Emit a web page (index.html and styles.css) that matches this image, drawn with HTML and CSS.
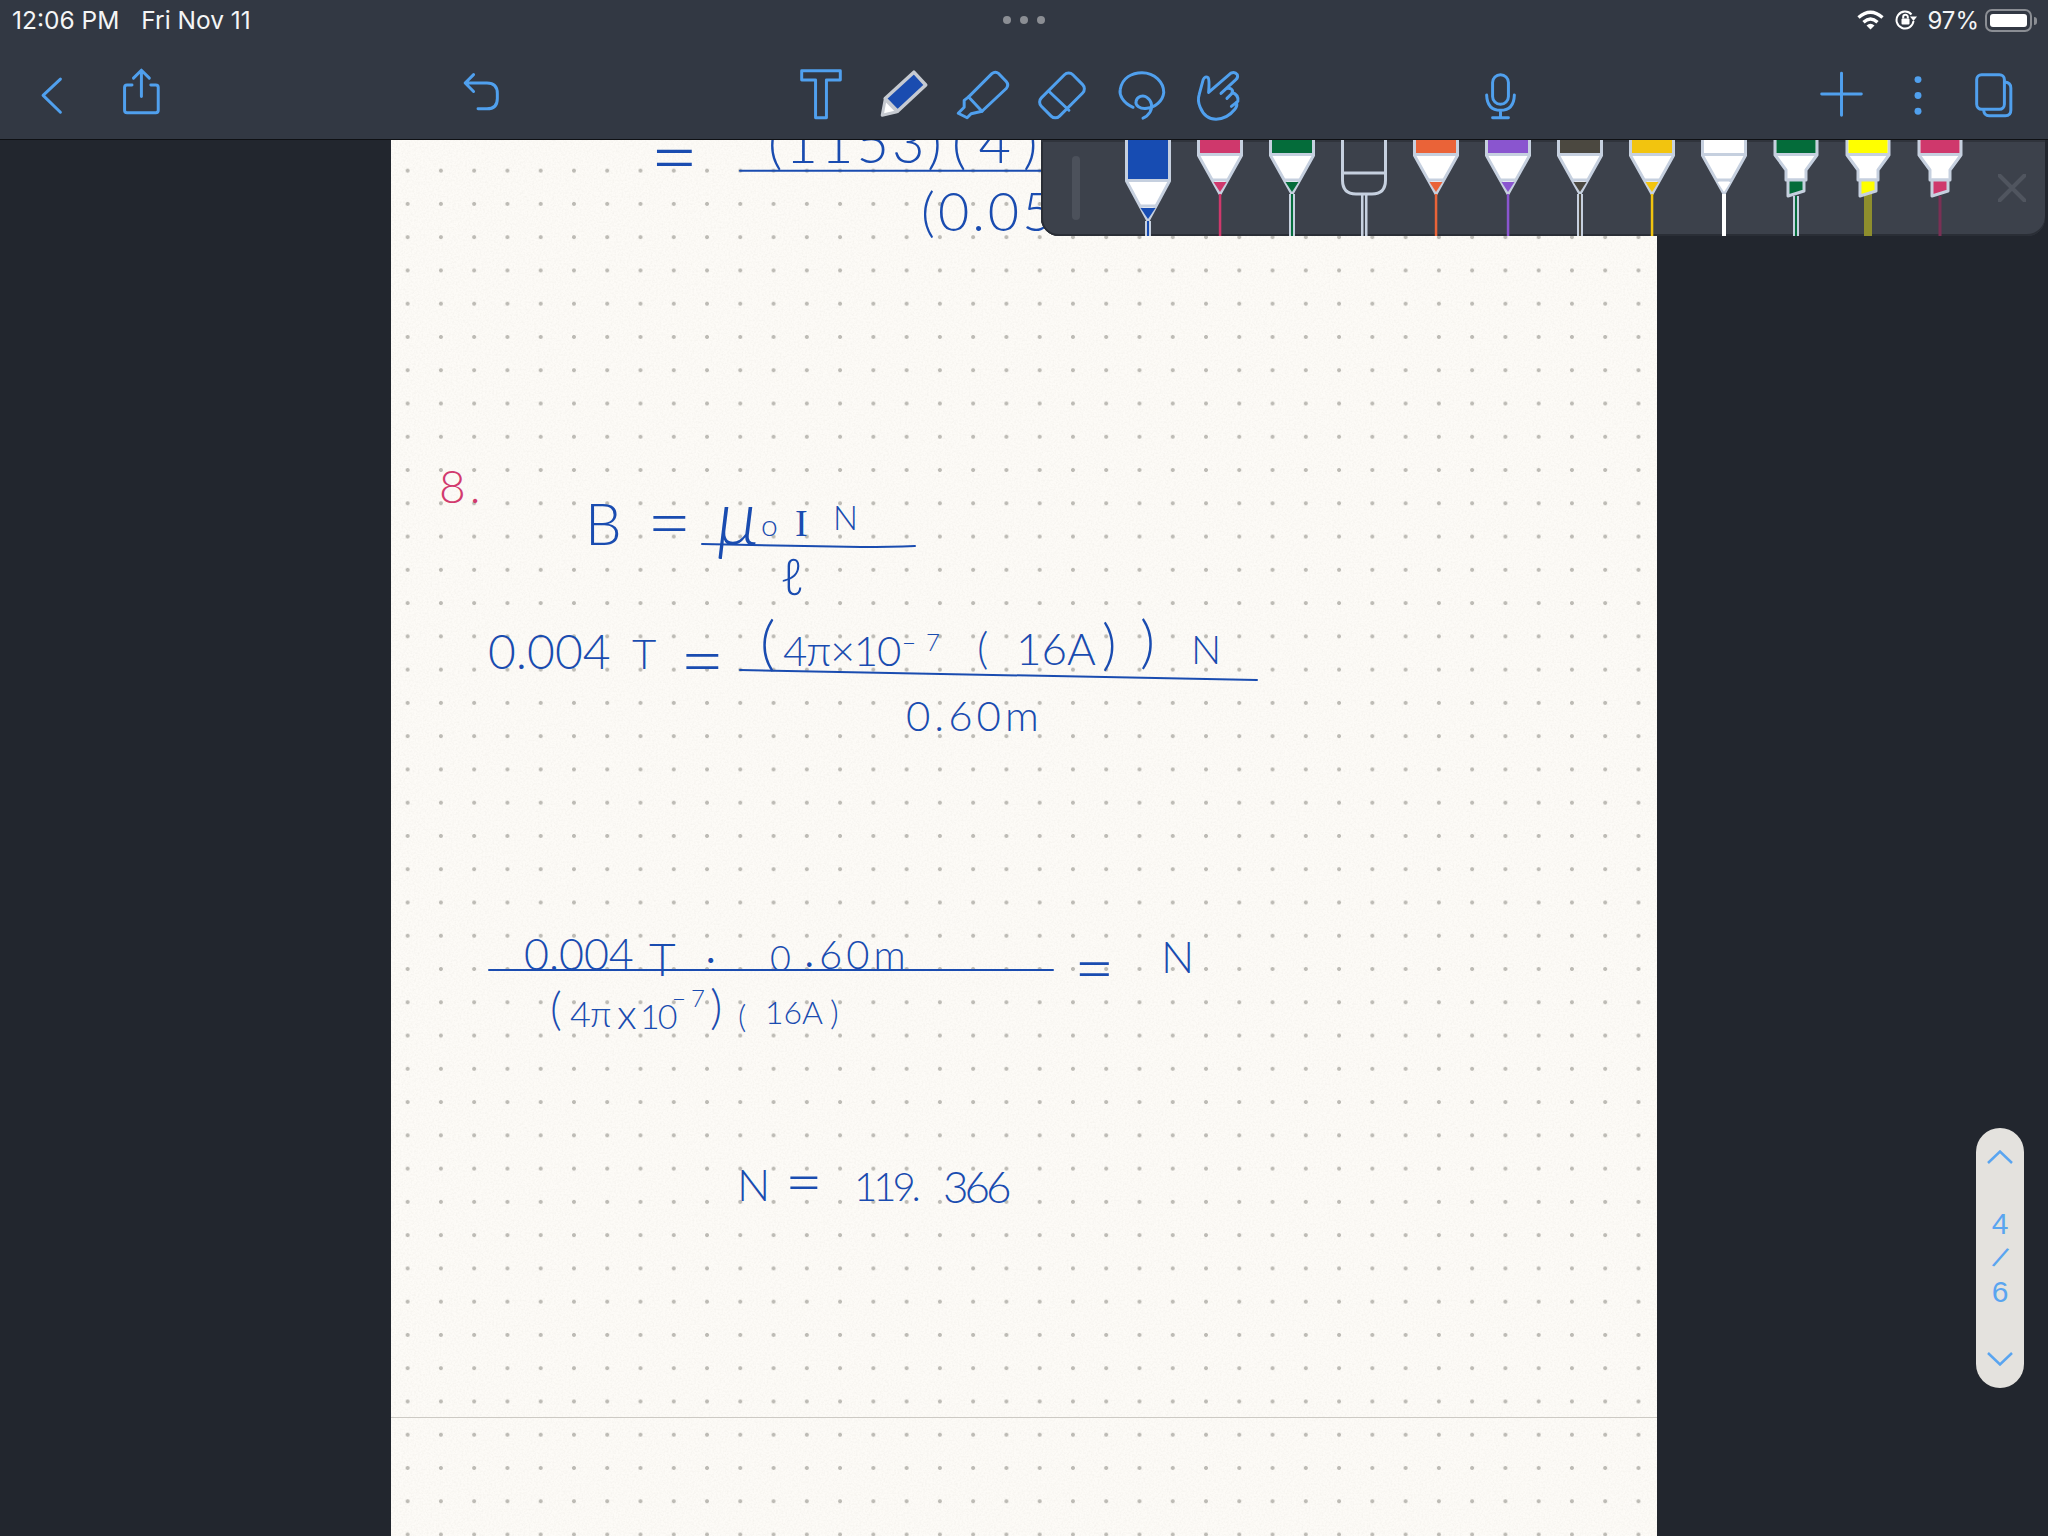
FILE: index.html
```html
<!DOCTYPE html>
<html lang="en">
  <head>
    <meta charset="UTF-8" />
    <meta name="viewport" content="width=device-width, initial-scale=1.0" />
    <title>Notes</title>
    <link rel="stylesheet" href="styles.css">
  </head>
  <body>
    <!-- shared pen shapes -->
    <svg class="defs" aria-hidden="true">
      <defs>
        <g id="nib">
          <path class="rim" d="M14.5 -2V15.5L36 54L57.5 15.5V-2Z" />
          <rect x="16" y="0" width="40" height="13" fill="currentColor" />
          <path class="rim-line" d="M15 14.500H57" />
          <path class="rim-line" d="M28 40H44" />
          <path d="M29.5 42H42.5L36 52Z" fill="currentColor" />
        </g>
        <g id="nib-long">
          <path class="rim" d="M14.5 -2V41L36 81L57.5 41V-2Z" />
          <rect x="16" y="0" width="40" height="39" fill="currentColor" />
          <path class="rim-line" d="M15 40.500H57" />
          <path class="rim-line" d="M27 66H45" />
          <path d="M28.5 68H43.5L36 79Z" fill="currentColor" />
        </g>
        <g id="marker">
          <path class="rim" d="M15 -2V15L26 30V40H46V30L57 15V-2Z" />
          <rect x="16.5" y="0" width="39" height="13" fill="currentColor" />
          <path class="rim-line" d="M15 14.500H57" />
          <path class="rim-tip" d="M28 40H44V51L28 56Z" fill="currentColor" />
        </g>
      </defs>
    </svg>

    <header class="topbar">
      <div class="status">
        <div class="status-time"><span>12:06 PM</span><span>Fri Nov 11</span></div>
        <div class="status-dots"><i></i><i></i><i></i></div>
        <div class="status-right">
          <svg class="wifi" viewBox="0 0 27 20" width="27" height="20">
            <path d="M1.5 7.5Q13.5 -3 25.5 7.5" />
            <path d="M6.5 12.2Q13.5 6 20.5 12.2" />
            <path class="wifi-dot" d="M13.5 19.5L9.5 15.4Q13.5 12 17.5 15.4Z" />
          </svg>
          <svg class="rotlock" viewBox="0 0 22 20" width="22" height="20">
            <path d="M16.5 4.5A8.5 8.5 0 1 0 18.5 11" />
            <path class="rotlock-fill" d="M15 6.5H22L18.5 11Z" />
            <rect class="rotlock-fill" x="6.5" y="8.5" width="8" height="6" rx="1" />
            <path d="M8.2 8.5V7a2.3 2.3 0 0 1 4.6 0V8.5" />
          </svg>
          <span class="battery-pct">97%</span>
          <div class="battery"><div class="battery-level"></div></div>
        </div>
      </div>

      <nav class="tools">
        <svg class="tool" viewBox="12 40 80 100"><path d="M60.5 79.5L43 96L60.5 113" /></svg>
        <svg class="tool" viewBox="92 40 80 100">
          <path d="M132 85.5H127a2.500 2.500 0 0 0-2.500 2.500V111a2.500 2.500 0 0 0 2.500 2.500H156a2.500 2.500 0 0 0 2.500-2.500V88a2.500 2.500 0 0 0-2.500-2.500H151" />
          <path d="M141.500 97V71M133.500 78.500L141.500 70.500L149.500 78.500" />
        </svg>

        <svg class="tool tool-undo" viewBox="441 40 80 100">
          <path d="M473.500 75L465 83.500L473.500 92M465 83.500H487Q497.500 83.500 497.500 94V99Q497.500 109.500 487 109.500H478" />
        </svg>

        <div class="tool-group">
          <svg class="tool" viewBox="781 40 80 100">
            <path d="M801.500 71H840.500V80.500H826.500V118.500H815.500V80.500H801.500Z" />
          </svg>
          <svg class="tool" viewBox="861 40 80 100">
            <path class="pen-body" d="M914 72.500L926 85.500L897.500 112L885 99Z" />
            <path class="pen-tip" d="M885 100L897 112.500L882 116Z" />
          </svg>
          <svg class="tool" viewBox="941 40 80 100">
            <path d="M992 74Q995.500 71 999 74L1006.500 82Q1009.500 85.500 1006.500 89L982 112L968.500 97.500Z" />
            <path d="M968.500 97.500L964 101V108L958 114L967 118.500L971 114.500L982 112" />
          </svg>
          <svg class="tool" viewBox="1021 40 80 100">
            <rect x="1039.500" y="83" width="45" height="26" rx="6" transform="rotate(-45 1062 96)" />
            <path d="M1048.500 91.500L1069 111" />
          </svg>
          <svg class="tool" viewBox="1101 40 80 100">
            <path d="M1133 108C1122 103 1119 95 1120 90C1122 78 1132 73 1142 73C1155 73 1164 83 1164 93C1163 102 1155 108 1147 109C1140 110 1135 106 1136 102C1137 97 1143 95 1147 98C1152 101 1153 108 1150 113C1148 116 1146 118 1143 119" />
          </svg>
          <svg class="tool" viewBox="1181 40 80 100">
            <path d="M1208.500 93L1231 73.500Q1235 71.500 1237.500 75Q1238.500 78 1236 80L1221 94M1226.500 89Q1233 88 1233 93L1227 99M1232 93Q1239 95 1238 102L1231.500 107M1236.500 103Q1238 106 1235 110Q1227 120 1216 120Q1205 120 1200 108Q1197 101 1199 95L1203 80Q1205 76 1208 78Q1209.500 80 1208.500 93" />
          </svg>
        </div>

        <svg class="tool tool-mic" viewBox="1461 40 80 100">
          <rect x="1492.500" y="75" width="16" height="30" rx="8" />
          <path d="M1486.500 95.500Q1487 111 1500.500 111Q1514 111 1514.500 95.500M1500.500 111V118M1492.500 118.500H1508.500" />
        </svg>

        <div class="tool-group tool-group-right">
          <svg class="tool" viewBox="1802 40 80 100"><path d="M1821.500 94.500H1861.500M1841.500 73.500V116" /></svg>
          <svg class="tool tool-more" viewBox="1882 40 72 100">
            <circle cx="1918" cy="80" r="3.500" />
            <circle cx="1918" cy="96" r="3.500" />
            <circle cx="1918" cy="112" r="3.500" />
          </svg>
          <svg class="tool" viewBox="1954 40 80 100">
            <rect x="1976.500" y="75" width="28" height="35" rx="5" />
            <path d="M2005 82.500Q2011 83 2011 88.500V111Q2011 116.500 2005.500 116.500H1989Q1984 116.500 1983.500 110.500" />
          </svg>
        </div>
      </nav>
    </header>

    <main class="desk">
      <section class="paper">
        <svg class="grain" aria-hidden="true">
          <filter id="grain-noise">
            <feTurbulence type="fractalNoise" baseFrequency="0.55" numOctaves="3" />
            <feColorMatrix values="0 0 0 0 0.55  0 0 0 0 0.53  0 0 0 0 0.48  0 0 0 0.25 -0.09" />
          </filter>
          <rect width="100%" height="100%" filter="url(#grain-noise)" />
        </svg>
        <div class="page"></div>

        <!-- fraction bars -->
        <svg class="bars" aria-hidden="true">
          <path d="M349 30.700H652" />
          <path d="M311 404Q400 406 470 407Q500 407 524 406" />
          <path d="M349 530Q600 534 866 540" />
          <path d="M98 830H662" />
        </svg>

        <!-- handwriting, each piece sits where it was written -->
        <span class="hw a1">=</span>
        <span class="hw a2">(1153)</span>
        <span class="hw a3">(4)</span>
        <span class="hw a4">(0.05</span>

        <span class="hw hw-red b1">8.</span>
        <span class="hw b2">B</span>
        <span class="hw b3">=</span>
        <span class="hw b4">μ</span>
        <span class="hw b5">o</span>
        <span class="hw b6">I</span>
        <span class="hw b7">N</span>
        <span class="hw b8">ℓ</span>

        <span class="hw c1">0.004</span>
        <span class="hw c2">T</span>
        <span class="hw c3">=</span>
        <span class="hw c4">(</span>
        <span class="hw c5">4π×10</span>
        <span class="hw c6">−7</span>
        <span class="hw c7">(</span>
        <span class="hw c8">16A</span>
        <span class="hw c9">)</span>
        <span class="hw c10">)</span>
        <span class="hw c11">N</span>
        <span class="hw c12">0.60m</span>

        <span class="hw d1">0.004</span>
        <span class="hw d2">T</span>
        <span class="hw d3">.</span>
        <span class="hw d4">0</span>
        <span class="hw d5">.</span>
        <span class="hw d6">60m</span>
        <span class="hw d7">=</span>
        <span class="hw d8">N</span>
        <span class="hw d9">(</span>
        <span class="hw d10">4π</span>
        <span class="hw d11">x</span>
        <span class="hw d12">10</span>
        <span class="hw d13">−7</span>
        <span class="hw d14">)</span>
        <span class="hw d15">(</span>
        <span class="hw d16">16A</span>
        <span class="hw d17">)</span>

        <span class="hw e1">N</span>
        <span class="hw e2">=</span>
        <span class="hw e3">119.</span>
        <span class="hw e4">366</span>
      </section>

      <aside class="palette">
        <div class="palette-handle"></div>
        <svg class="pen pen-blue" viewBox="0 0 72 96">
          <use href="#nib-long" />
          <rect class="stem-rim" x="33" y="81" width="6" height="15" />
          <rect class="stem" x="35" y="81" width="2" height="15" />
        </svg>
        <svg class="pen pen-pink" viewBox="0 0 72 96">
          <use href="#nib" />
          <rect class="stem" x="34.800" y="54" width="2.500" height="42" />
        </svg>
        <svg class="pen pen-green" viewBox="0 0 72 96">
          <use href="#nib" />
          <rect class="stem-rim" x="33" y="54" width="6" height="42" />
          <rect class="stem" x="35" y="54" width="2" height="42" />
        </svg>
        <svg class="pen" viewBox="0 0 72 96">
          <path class="rim-open" d="M14.500 -2V40Q14.500 54 28 54H44Q57.500 54 57.500 40V-2M14.500 33H57.500" />
          <rect class="stem-rim" x="33" y="54" width="2.500" height="42" />
          <rect class="stem-rim" x="37" y="54" width="2.500" height="42" />
        </svg>
        <svg class="pen pen-orange" viewBox="0 0 72 96">
          <use href="#nib" />
          <rect class="stem" x="34.800" y="54" width="2.500" height="42" />
        </svg>
        <svg class="pen pen-purple" viewBox="0 0 72 96">
          <use href="#nib" />
          <rect class="stem" x="34.800" y="54" width="2.500" height="42" />
        </svg>
        <svg class="pen pen-grey" viewBox="0 0 72 96">
          <use href="#nib" />
          <rect class="stem-rim" x="33" y="54" width="6" height="42" />
          <rect class="stem" x="35" y="54" width="2" height="42" />
        </svg>
        <svg class="pen pen-yellow" viewBox="0 0 72 96">
          <use href="#nib" />
          <rect class="stem" x="34.800" y="54" width="2.500" height="42" />
        </svg>
        <svg class="pen pen-white" viewBox="0 0 72 96">
          <use href="#nib" />
          <rect class="stem" x="34" y="54" width="4" height="42" />
        </svg>
        <svg class="pen pen-green" viewBox="0 0 72 96">
          <use href="#marker" />
          <rect class="stem-rim" x="33" y="56" width="6" height="40" />
          <rect class="stem" x="35" y="56" width="2" height="40" />
        </svg>
        <svg class="pen pen-lemon" viewBox="0 0 72 96">
          <rect class="stem-wide" x="32" y="52" width="8" height="44" />
          <use href="#marker" />
        </svg>
        <svg class="pen pen-pink" viewBox="0 0 72 96">
          <use href="#marker" />
          <rect class="stem-dim" x="34.500" y="56" width="3" height="40" />
        </svg>
        <svg class="palette-close" viewBox="0 0 28 28" width="28" height="28">
          <path d="M1.500 1.500L26.500 26.500M26.500 1.500L1.500 26.500" />
        </svg>
      </aside>

      <aside class="pager">
        <svg class="pager-arrow" viewBox="0 0 26 14" width="26" height="14"><path d="M1 13L13 1.500L25 13" /></svg>
        <div class="pager-count">
          <span>4</span>
          <span class="pager-slash">/</span>
          <span>6</span>
        </div>
        <svg class="pager-arrow" viewBox="0 0 26 14" width="26" height="14"><path d="M1 1L13 12.500L25 1" /></svg>
      </aside>
    </main>
  </body>
</html>
```

FILE: styles.css
```css
* {
  box-sizing: border-box;
}

html,
body {
  height: 100%;
}

body {
  margin: 0;
  overflow: hidden;
  background-color: #22262e;
  color: #fff;
  font-family: Inter, "Liberation Sans", sans-serif;
}

.defs {
  position: absolute;
  width: 0;
  height: 0;
}

/* top bar */
.topbar {
  height: 140px;
  background-color: #323843;
  border-bottom: 1px solid #0e1014;
}

.status {
  display: grid;
  grid-template-columns: 1fr auto 1fr;
  align-items: center;
  height: 40px;
  padding: 0 16px;
}

.status-time {
  display: flex;
  gap: 22px;
  margin-left: -4px;
  font-size: 24.500px;
  color: #f4f5f6;
}

.status-dots {
  display: flex;
  gap: 9px;
}

.status-dots i {
  width: 8px;
  height: 8px;
  border-radius: 50%;
  background-color: #8b8e94;
}

.status-right {
  display: flex;
  justify-content: flex-end;
  align-items: center;
  gap: 11px;
}

.wifi path {
  fill: none;
  stroke: #fff;
  stroke-width: 3.4;
}

.wifi .wifi-dot {
  fill: #fff;
  stroke: none;
}

.rotlock path {
  fill: none;
  stroke: #fff;
  stroke-width: 2;
}

.rotlock .rotlock-fill {
  fill: #fff;
  stroke: none;
}

.battery-pct {
  font-size: 24px;
  margin-left: -1px;
  margin-right: -5px;
  color: #f4f5f6;
}

.battery {
  position: relative;
  width: 47px;
  height: 23px;
  padding: 3px;
  border: 2px solid #8b8e94;
  border-radius: 7px;
}

.battery::after {
  content: "";
  position: absolute;
  right: -7px;
  top: 6px;
  width: 3px;
  height: 8px;
  border-radius: 0 3px 3px 0;
  background-color: #8b8e94;
}

.battery-level {
  height: 100%;
  border-radius: 3px;
  background-color: #fff;
}

/* tool row */
.tools {
  display: flex;
  height: 99px;
  padding-left: 12px;
}

.tool {
  flex: none;
  width: 80px;
  height: 99px;
  fill: none;
  stroke: #50a0ee;
  stroke-width: 3;
  stroke-linecap: round;
  stroke-linejoin: round;
}

.tool-undo {
  margin-left: 269px;
}

.tool-mic {
  margin-left: 200px;
}

.tool-group {
  display: flex;
  margin-left: 260px;
}

.tool-group-right {
  margin-left: auto;
  padding-right: 14px;
}

.tool-more {
  width: 72px;
  fill: #50a0ee;
  stroke: none;
}

.pen-body {
  fill: #1a4cb0;
  stroke: #c6cad1;
  stroke-width: 3.5;
}

.pen-tip {
  fill: #fff;
  stroke: #c6cad1;
  stroke-width: 3;
}

/* paper */
.desk {
  position: relative;
  height: calc(100% - 140px);
}

.paper {
  position: relative;
  width: 1266px;
  height: 100%;
  margin-left: 391px;
  overflow: hidden;
  background-color: #fdfbf7;
  background-image: radial-gradient(circle, #bdbbb5 0, #bdbbb5 1.6px, transparent 2.300px);
  background-size: 33.280px 33.280px;
  background-position: 0 14px;
}

.grain,
.bars {
  position: absolute;
  top: 0;
  left: 0;
  width: 100%;
  height: 100%;
}

.page {
  position: relative;
  height: 1278px;
  border-bottom: 1px solid #cdcac4;
}

.bars path {
  fill: none;
  stroke: #1a4cb0;
  stroke-width: 2;
  stroke-linecap: round;
}

.hw {
  position: absolute;
  line-height: 1;
  white-space: nowrap;
  color: #1a4cb0;
  font-family: Lato, "Open Sans", sans-serif;
  font-weight: 300;
}

.hw-red {
  color: #d23a6e;
}

/* top of the page, mostly under the toolbar */
.a1 { left: 259px; top: -27px; font-size: 84px; }
.a2 { left: 377px; top: -26px; font-size: 56px; letter-spacing: 3px; }
.a3 { left: 561px; top: -26px; font-size: 56px; letter-spacing: 12px; }
.a4 { left: 530px; top: 44px; font-size: 54px; letter-spacing: 3px; }

/* B = u0 I N / l */
.b1 { left: 48px; top: 323px; font-size: 46px; letter-spacing: 4px; }
.b2 { left: 194px; top: 354px; font-size: 58px; }
.b3 { left: 256px; top: 342px; font-size: 77px; }
.b4 { left: 326px; top: 338px; font-size: 76px; font-style: italic; }
.b5 { left: 370px; top: 369px; font-size: 30px; }
.b6 { left: 404px; top: 364px; font-size: 38px; font-family: "Liberation Serif", serif; font-weight: 400; }
.b7 { left: 442px; top: 361px; font-size: 33px; }
.b8 { left: 389px; top: 411px; font-size: 50px; font-family: "Open Sans", sans-serif; }

/* 0.004 T = ... */
.c1 { left: 97px; top: 487px; font-size: 48px; }
.c2 { left: 241px; top: 492px; font-size: 42px; }
.c3 { left: 289px; top: 480px; font-size: 77px; }
.c4 { left: 369px; top: 471px; font-size: 60px; }
.c5 { left: 392px; top: 489px; font-size: 42px; letter-spacing: -1px; }
.c6 { left: 511px; top: 490px; font-size: 24px; letter-spacing: 10px; }
.c7 { left: 586px; top: 485px; font-size: 44px; }
.c8 { left: 625px; top: 486px; font-size: 44px; }
.c9 { left: 711px; top: 475px; font-size: 56px; }
.c10 { left: 749px; top: 471px; font-size: 58px; }
.c11 { left: 800px; top: 489px; font-size: 40px; }
.c12 { left: 515px; top: 554px; font-size: 42px; letter-spacing: 4px; }

/* second fraction */
.d1 { left: 133px; top: 792px; font-size: 43px; }
.d2 { left: 258px; top: 796px; font-size: 46px; }
.d3 { left: 315px; top: 788px; font-size: 40px; font-weight: 400; }
.d4 { left: 379px; top: 799px; font-size: 36px; }
.d5 { left: 414px; top: 795px; font-size: 36px; font-weight: 400; }
.d6 { left: 428px; top: 794px; font-size: 40px; letter-spacing: 4px; }
.d7 { left: 683px; top: 791px; font-size: 70px; }
.d8 { left: 770px; top: 794px; font-size: 44px; }
.d9 { left: 159px; top: 845px; font-size: 46px; }
.d10 { left: 179px; top: 855px; font-size: 36px; letter-spacing: -1px; }
.d11 { left: 226px; top: 852px; font-size: 42px; }
.d12 { left: 249px; top: 859px; font-size: 34px; letter-spacing: -2px; }
.d13 { left: 281px; top: 846px; font-size: 24px; letter-spacing: 5px; }
.d14 { left: 319px; top: 842px; font-size: 48px; }
.d15 { left: 347px; top: 860px; font-size: 32px; }
.d16 { left: 374px; top: 856px; font-size: 32px; }
.d17 { left: 439px; top: 855px; font-size: 34px; }

/* N = 119.366 */
.e1 { left: 346px; top: 1022px; font-size: 44px; }
.e2 { left: 394px; top: 1008px; font-size: 65px; }
.e3 { left: 463px; top: 1026px; font-size: 40px; letter-spacing: -4px; }
.e4 { left: 552px; top: 1024px; font-size: 44px; letter-spacing: -4px; }

/* pen palette, hangs over the paper */
.palette {
  position: absolute;
  top: 0;
  left: 1041px;
  display: flex;
  align-items: flex-start;
  width: 1004px;
  height: 96px;
  padding-left: 31px;
  overflow: hidden;
  background-color: #3c414b;
  box-shadow: inset 0 2px 0 #30343c, inset 2px 0 0 #2a2e36, inset 0 -2px 0 #2a2e36;
  border-radius: 0 0 18px 18px;
}

.palette-handle {
  flex: none;
  width: 8px;
  height: 64px;
  margin: 16px 32px 0 0;
  border-radius: 4px;
  background-color: #4c515b;
}

.pen {
  flex: none;
  width: 72px;
  height: 96px;
}

.pen-blue { color: #174cb2; }
.pen-pink { color: #cf386c; }
.pen-green { color: #046c3a; }
.pen-orange { color: #ea6338; }
.pen-purple { color: #8a55cf; }
.pen-grey { color: #4b4840; }
.pen-yellow { color: #f2c40f; }
.pen-white { color: #fff; }
.pen-lemon { color: #ffff00; }

.rim {
  fill: #fff;
  stroke: #c6d0df;
  stroke-width: 3;
  stroke-linejoin: round;
}

.rim-line {
  fill: none;
  stroke: #c6d0df;
  stroke-width: 3;
}

.rim-tip {
  stroke: #c6d0df;
  stroke-width: 3;
  stroke-linejoin: round;
}

.rim-open {
  fill: none;
  stroke: #c6d0df;
  stroke-width: 3;
}

.stem {
  fill: currentColor;
}

.stem-rim {
  fill: #c6d0df;
}

.stem-wide {
  fill: #8e8e2d;
}

.stem-dim {
  fill: #7a3055;
}

.palette-close {
  flex: none;
  margin: 34px 0 0 22px;
}

.palette-close path {
  fill: none;
  stroke: #50555f;
  stroke-width: 4;
  stroke-linecap: round;
}

/* page counter */
.pager {
  position: absolute;
  top: 988px;
  right: 24px;
  display: flex;
  flex-direction: column;
  align-items: center;
  justify-content: space-between;
  width: 48px;
  height: 260px;
  padding: 22px 0;
  border-radius: 24px;
  background-color: #e4e2de;
  color: #5aa5f0;
}

.pager-arrow path {
  fill: none;
  stroke: #5aa5f0;
  stroke-width: 2.500;
}

.pager-count {
  display: flex;
  flex-direction: column;
  align-items: center;
  font-family: "Liberation Sans", Arial, sans-serif;
  font-size: 30px;
  line-height: 34px;
}

.pager-slash {
  transform: rotate(26deg);
  font-weight: 400;
}
```
